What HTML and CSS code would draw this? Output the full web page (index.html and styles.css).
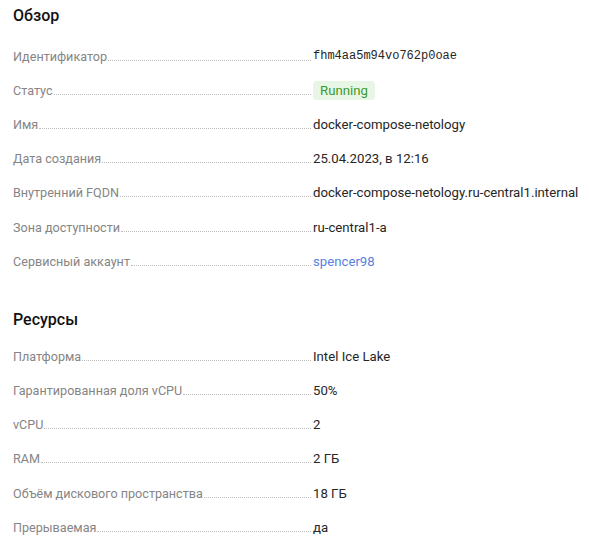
FILE: index.html
```html
<!DOCTYPE html>
<html lang="ru">
<head>
<meta charset="utf-8">
<title>Обзор</title>
<link rel="stylesheet" href="styles.css">
</head>
<body>
<div class="page">
  <section class="section">
    <h2 class="section-title">Обзор</h2>
    <dl class="props">
      <div class="row"><dt class="label"><span class="label-text">Идентификатор</span><span class="leader"></span></dt><dd class="value mono">fhm4aa5m94vo762p0oae</dd></div>
      <div class="row"><dt class="label"><span class="label-text">Статус</span><span class="leader"></span></dt><dd class="value"><span class="badge">Running</span></dd></div>
      <div class="row"><dt class="label"><span class="label-text">Имя</span><span class="leader"></span></dt><dd class="value">docker-compose-netology</dd></div>
      <div class="row"><dt class="label"><span class="label-text">Дата создания</span><span class="leader"></span></dt><dd class="value">25.04.2023, в 12:16</dd></div>
      <div class="row"><dt class="label"><span class="label-text">Внутренний FQDN</span><span class="leader"></span></dt><dd class="value">docker-compose-netology.ru-central1.internal</dd></div>
      <div class="row"><dt class="label"><span class="label-text">Зона доступности</span><span class="leader"></span></dt><dd class="value">ru-central1-a</dd></div>
      <div class="row"><dt class="label"><span class="label-text">Сервисный аккаунт</span><span class="leader"></span></dt><dd class="value"><a class="link" href="#">spencer98</a></dd></div>
    </dl>
  </section>
  <section class="section section-second">
    <h2 class="section-title">Ресурсы</h2>
    <dl class="props">
      <div class="row"><dt class="label"><span class="label-text">Платформа</span><span class="leader"></span></dt><dd class="value">Intel Ice Lake</dd></div>
      <div class="row"><dt class="label"><span class="label-text">Гарантированная доля vCPU</span><span class="leader"></span></dt><dd class="value">50%</dd></div>
      <div class="row"><dt class="label"><span class="label-text">vCPU</span><span class="leader"></span></dt><dd class="value">2</dd></div>
      <div class="row"><dt class="label"><span class="label-text">RAM</span><span class="leader"></span></dt><dd class="value">2 ГБ</dd></div>
      <div class="row"><dt class="label"><span class="label-text">Объём дискового пространства</span><span class="leader"></span></dt><dd class="value">18 ГБ</dd></div>
      <div class="row"><dt class="label"><span class="label-text">Прерываемая</span><span class="leader"></span></dt><dd class="value">да</dd></div>
    </dl>
  </section>
</div>
</body>
</html>
```

FILE: styles.css
```css
html, body {
  margin: 0;
  padding: 0;
  background: #ffffff;
}

body {
  font-family: Roboto, "Liberation Sans", sans-serif;
  font-size: 13px;
  color: #222222;
}

.page {
  padding: 4px 0 0 13px;
}

.section-title {
  margin: 0 0 11px 0;
  font-size: 16px;
  line-height: 24px;
  font-weight: 500;
  color: #111111;
}

.section-second {
  margin-top: 30px;
}

.section-second .section-title {
  margin-bottom: 7px;
}

.props {
  margin: 0;
}

.row {
  display: flex;
  align-items: center;
  height: 34.2px;
}

.label {
  width: 300px;
  display: flex;
  align-items: baseline;
  color: #858585;
  font-size: 12.6px;
  margin: 0;
  flex: none;
}

.label-text {
  white-space: nowrap;
}

.leader {
  flex: 1;
  border-bottom: 1px dotted #bdbdbd;
  margin: 0 2px 0 1px;
}

.value {
  margin: 0;
  white-space: nowrap;
  font-size: 13.2px;
  color: #262626;
}

.mono {
  font-family: "Liberation Mono", "DejaVu Sans Mono", monospace;
  font-size: 12px;
}

.badge {
  display: inline-block;
  padding: 0 7px;
  line-height: 19px;
  border-radius: 4px;
  background: #e8f6e6;
  color: #3c9a2f;
}

.link {
  color: #5a7fe0;
  text-decoration: none;
}
```
